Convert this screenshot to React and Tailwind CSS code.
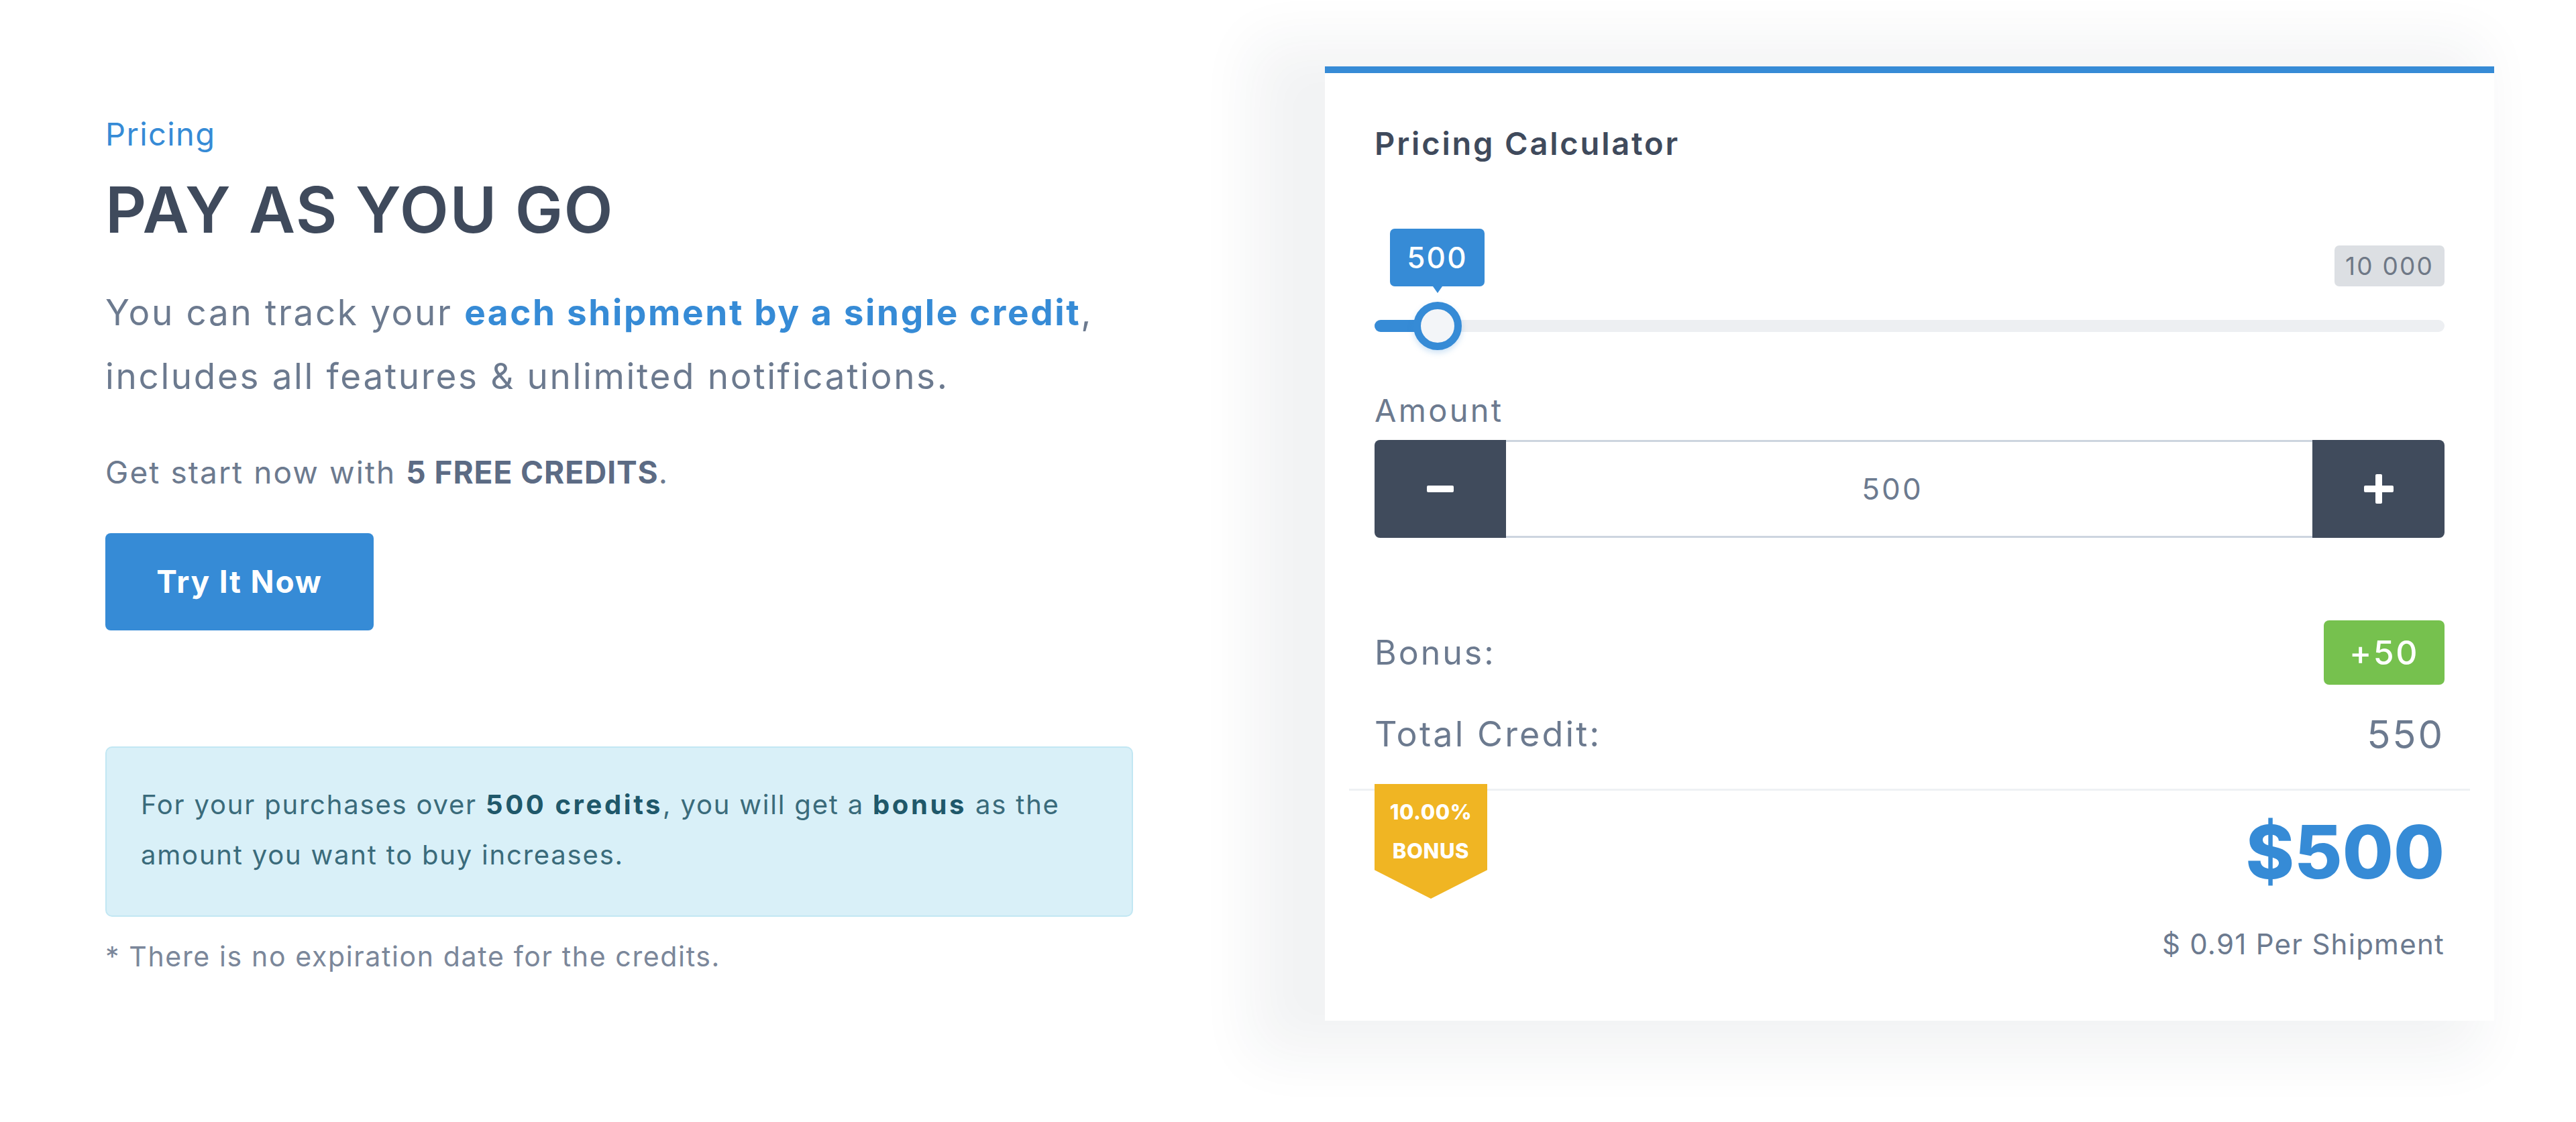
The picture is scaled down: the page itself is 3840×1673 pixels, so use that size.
export default function App() {
  const font = "font-['Inter',sans-serif]";
  return (
    <div className={`${font} w-full h-[1673px] bg-white flex items-start pl-[157px]`}>
      {/* Left column */}
      <div className="w-[1532px] pt-[172px] flex flex-col items-start">
        <div className="text-[47px] leading-[56px] tracking-[0.03em] text-[#368bd6]">Pricing</div>
        <h1 className="mt-[30px] text-[95px] leading-[110px] tracking-[0.018em] font-semibold text-[#3f4a5c]">PAY AS YOU GO</h1>
        <p className="mt-[51px] text-[53px] leading-[95px] tracking-[0.05em] text-[#6c7a8f]">
          You can track your <span className="font-bold text-[#368bd6]">each shipment by a single credit</span>,
          <br />
          includes all features &amp; unlimited notifications.
        </p>
        <p className="mt-[65px] text-[46px] leading-[60px] tracking-[0.045em] text-[#6c7a8f]">
          Get start now with <span className="font-bold text-[#5c6b84] tracking-[0.02em]">5 FREE CREDITS</span>.
        </p>
        <button className="mt-[61px] w-[400px] h-[145px] rounded-[8px] bg-[#368bd6] text-white text-[46px] tracking-[0.04em] font-bold">
          Try It Now
        </button>
        <div className="mt-[173px] w-full h-[254px] rounded-[10px] bg-[#d9f0f8] border-2 border-[#c2e7f3] pl-[51px] pt-[47px]">
          <p className="text-[40px] leading-[75px] tracking-[0.045em] text-[#3a6b7b]">
            For your purchases over <span className="font-bold text-[#1f586a] tracking-[0.09em]">500 credits</span>, you will get a{" "}
            <span className="font-bold text-[#1f586a] tracking-[0.09em]">bonus</span> as the
            <br />
            amount you want to buy increases.
          </p>
        </div>
        <p className="mt-[34px] text-[41px] leading-[50px] tracking-[0.04em] text-[#7b879a]">* There is no expiration date for the credits.</p>
      </div>

      {/* Right card */}
      <div className="ml-[286px] mt-[99px] w-[1743px] bg-white border-t-[10px] border-[#368bd6] shadow-[-64px_8px_80px_44px_rgba(40,50,70,0.06)] px-[74px] pt-[78px] pb-[89px]">
        <h2 className="text-[47px] leading-[54px] tracking-[0.06em] font-semibold text-[#3f4a5c]">Pricing Calculator</h2>

        {/* Slider */}
        <div className="mt-[100px]">
          <div className="flex justify-between items-start">
            <div className="relative ml-[23px] w-[141px] h-[86px] rounded-[7px] bg-[#368bd6] flex items-center justify-center text-white text-[44px] tracking-[0.05em] font-medium">
              500
              <div className="absolute left-1/2 -translate-x-1/2 top-full w-0 h-0 border-l-[7px] border-r-[7px] border-t-[10px] border-l-transparent border-r-transparent border-t-[#368bd6]" />
            </div>
            <div className="mt-[25px] w-[164px] h-[61px] rounded-[7px] bg-[#dcdfe3] flex items-center justify-center text-[37px] tracking-[0.06em] text-[#6f7886]">
              10 000
            </div>
          </div>
          <div className="relative mt-[50px] h-[18px] rounded-full bg-[#edeff2]">
            <div className="absolute left-0 top-0 h-full w-[94px] rounded-l-full bg-[#368bd6]" />
            <div className="absolute left-[58px] top-[-27px] w-[72px] h-[72px] rounded-full border-[11px] border-[#368bd6] bg-[#f3f5f8] shadow-[0_4px_8px_rgba(54,139,214,0.25)]" />
          </div>
        </div>

        {/* Amount */}
        <div className="mt-[90px] text-[47px] leading-[54px] tracking-[0.07em] text-[#6c7a8f]">Amount</div>
        <div className="mt-[17px] flex h-[146px]">
          <button className="w-[196px] h-full rounded-l-[8px] bg-[#404b5c] flex items-center justify-center">
            <svg width="40" height="10" viewBox="0 0 40 10"><rect x="0" y="0" width="40" height="10" rx="2" fill="white" /></svg>
          </button>
          <div className="flex-1 border-y-[3px] border-[#cdd5df] flex items-center justify-center pr-[50px] text-[44px] tracking-[0.07em] text-[#6c7a8f]">500</div>
          <button className="w-[197px] h-full rounded-r-[8px] bg-[#404b5c] flex items-center justify-center">
            <svg width="44" height="44" viewBox="0 0 44 44"><rect x="0" y="17" width="44" height="10" rx="2" fill="white" /><rect x="17" y="0" width="10" height="44" rx="2" fill="white" /></svg>
          </button>
        </div>

        {/* Bonus rows */}
        <div className="mt-[123px] flex justify-between items-center h-[96px]">
          <span className="text-[50px] leading-[58px] tracking-[0.06em] text-[#6c7a8f]">Bonus:</span>
          <span className="w-[180px] h-[96px] rounded-[8px] bg-[#76c14e] flex items-center justify-center text-white text-[50px] tracking-[0.05em] font-medium">+50</span>
        </div>
        <div className="mt-[42px] flex justify-between items-center h-[64px]">
          <span className="text-[52px] leading-[60px] tracking-[0.06em] text-[#6c7a8f]">Total Credit:</span>
          <span className="text-[58px] leading-[64px] tracking-[0.05em] text-[#6c7a8f]">550</span>
        </div>

        <div className="mt-[49px] -mx-[38px] h-[3px] bg-[#eef1f4]" />

        <div className="relative">
          <div className="absolute left-0 top-[-10px] w-[168px] h-[171px] bg-[#f0b523] [clip-path:polygon(0_0,100%_0,100%_75%,50%_100%,0_75%)] flex flex-col items-center pt-[13px] text-white font-extrabold text-[31px] tracking-[0.02em] leading-[58px]">
            <span>10.00%</span>
            <span>BONUS</span>
          </div>
          <div className="pt-[26px] flex flex-col items-end">
            <div className="text-[110px] leading-[130px] font-extrabold text-[#368bd6]">$500</div>
            <div className="mt-[48px] text-[42px] leading-[50px] tracking-[0.03em] text-[#6c7a8f]">$ 0.91 Per Shipment</div>
          </div>
        </div>
      </div>
    </div>
  );
}
